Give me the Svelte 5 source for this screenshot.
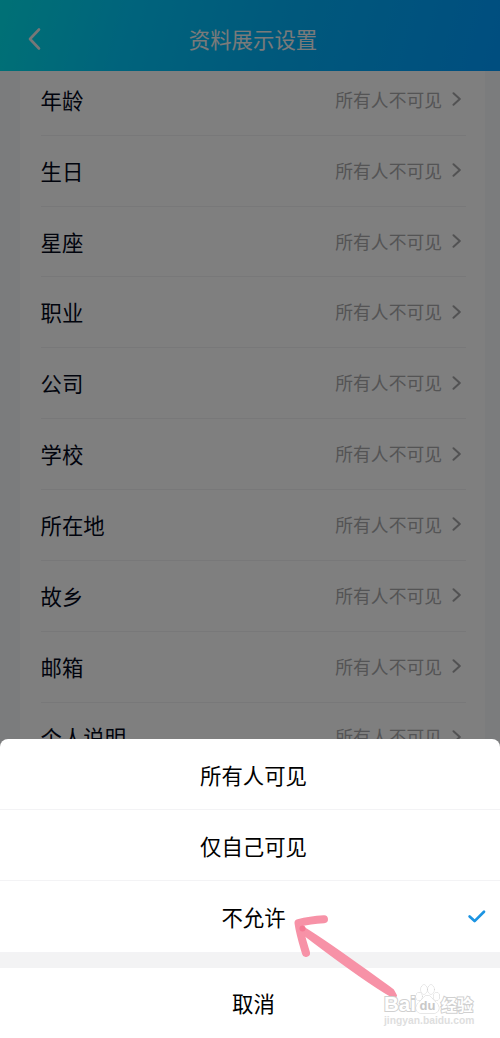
<script lang="ts">
    const fields = ["年龄", "生日", "星座", "职业", "公司", "学校", "所在地", "故乡", "邮箱", "个人说明"];
    const options = ["所有人可见", "仅自己可见", "不允许"];

    let selected = $state("不允许");
</script>

<div class="screen">
    <header>
        <svg class="back" width="16" height="24" viewBox="0 0 16 24">
            <path d="M13 2.500L4 12L13 21.500" />
        </svg>
        <h1>资料展示设置</h1>
    </header>

    <main>
        <div class="card">
            {#each fields as field}
                <div class="row">
                    <span class="name">{field}</span>
                    <span class="value">所有人不可见</span>
                    <svg class="chevron" width="10" height="14" viewBox="0 0 10 14">
                        <path d="M1.5 1.2L7.8 7L1.5 12.8" />
                    </svg>
                </div>
            {/each}
        </div>
    </main>

    <div class="backdrop"></div>

    <div class="sheet">
        {#each options as option}
            <button class="option" onclick={() => (selected = option)}>
                {option}
                {#if option === selected}
                    <svg class="check" width="20" height="16" viewBox="0 0 20 16">
                        <path d="M2.6 8.5L7.6 13.1L17 3.7" />
                    </svg>
                {/if}
            </button>
        {/each}
        <button class="option cancel">取消</button>
    </div>

    <svg class="arrow" width="120" height="100" viewBox="0 0 120 100">
        <path class="shaft" d="M15 18.500C45 37 72 58 103 80L106 85.500L105 87.500L101 86C72 69 45 48 12.500 23.500Z" />
        <path class="head" d="M34 9.200C25 9.700 16 11 8.500 13C10 24 13 33 16 43" />
        <circle class="tip" cx="12.500" cy="18.500" r="3" />
    </svg>

    <div class="watermark">
        <div class="brand">
            <span class="latin">Bai</span>
            <svg width="27" height="30" viewBox="0 0 27 30">
                <ellipse cx="5" cy="12.500" rx="3" ry="4" />
                <ellipse cx="10" cy="5.500" rx="3" ry="4.500" />
                <ellipse cx="17" cy="5.500" rx="3" ry="4.500" />
                <ellipse cx="22.500" cy="12.500" rx="3" ry="4" />
                <path d="M13.500 11.500C9.500 11.500 8.500 16 5 18.500C0.500 22 1.500 29 6.500 29H20.500C25.500 29 26.500 22 22 18.500C18.500 16 17.500 11.500 13.500 11.500Z" />
                <text x="13.500" y="26" text-anchor="middle">du</text>
            </svg>
            <span class="han">经验</span>
        </div>
        <div class="url">jingyan.baidu.com</div>
    </div>
</div>

<style>
    :global(body) {background: #fff}

    .screen {
        position: relative;
        display: flex;
        flex-direction: column;
        width: 500px;
        height: 1038px;
        overflow: hidden;
        font-family: "Noto Sans CJK SC", "Liberation Sans", sans-serif;
        color: #03081a;
    }

    header {
        display: grid;
        grid-template-columns: 70px 1fr 64px;
        align-items: center;
        flex: none;
        height: 70.5px;
        padding-top: 8px;
        box-sizing: border-box;
        background: linear-gradient(105deg, #00e2ec 0%, #00c8f8 25%, #00b2f8 55%, #009cff 100%);
    }

    h1 {
        margin: 0;
        font-size: 21.4px;
        font-weight: 400;
        line-height: 30px;
        text-align: center;
        color: #f4f4f4;
    }

    svg {
        fill: none;
        stroke-linecap: round;
        stroke-linejoin: round;
    }

    .back {
        margin-left: 26px;
        stroke: #eee;
        stroke-width: 2.6;
    }

    main {
        flex: 1;
        min-height: 0;
        overflow: hidden;
        padding: 0 15px 0 20px;
        background: #f7f8fa;
    }

    .card {
        margin-top: -5.6px;
        padding: 0 19px 0 20.500px;
        background: #fff;
    }

    .row {
        display: flex;
        align-items: center;
        height: 70.85px;
        box-sizing: border-box;
        border-bottom: 1px solid #f0f0f3;
    }

    .name {
        flex: 1;
        margin-top: -1px;
        font-size: 21.4px;
    }

    .value {
        margin-top: -2px;
        font-size: 17.8px;
        color: #a8a8aa;
    }

    .chevron {
        margin: -1px 4.5px 0 9.5px;
        stroke: #a4a4a6;
        stroke-width: 2;
    }

    .backdrop {
        position: absolute;
        inset: 0;
        background: rgba(0, 0, 0, 0.5);
    }

    .sheet {
        position: absolute;
        left: 0;
        right: 0;
        bottom: 0;
        border-radius: 8px 8px 0 0;
        background: #fff;
        overflow: hidden;
    }

    .option {
        position: relative;
        display: block;
        width: 100%;
        height: 71.2px;
        padding: 0 0 0 7px;
        border: 0;
        border-bottom: 1px solid #f3f3f5;
        background: none;
        font: inherit;
        font-size: 21.4px;
        color: #000;
    }

    .option.cancel {
        height: 85.4px;
        border-top: 15px solid #f3f3f4;
        border-bottom: 0;
    }

    .check {
        position: absolute;
        right: 13px;
        top: 27px;
        stroke: #1c94e2;
        stroke-width: 2.7;
    }

    .arrow {
        position: absolute;
        left: 290px;
        top: 910px;
    }

    .shaft {
        fill: #f792a7;
        stroke: #f792a7;
        stroke-width: 2;
    }

    .head {
        stroke: #f792a7;
        stroke-width: 8;
    }

    .tip {
        fill: #f47a94;
    }

    .watermark {
        position: absolute;
        left: 384px;
        top: 983px;
        color: #fff;
    }

    .brand {
        display: flex;
        align-items: flex-end;
        height: 31px;
        -webkit-text-stroke: 2px #d0d0d0;
        paint-order: stroke fill;
    }

    .latin {
        font: bold 20.500px/20px "Liberation Sans", sans-serif;
    }

    .brand svg {
        flex: none;
        margin-left: -2px;
        fill: #fff;
        stroke: #d0d0d0;
        stroke-width: 1;
    }

    .brand text {
        font: bold 13px "Liberation Sans", sans-serif;
        fill: #c8c8c8;
        stroke: none;
        -webkit-text-stroke: 0;
    }

    .han {
        font-size: 16px;
        font-weight: 700;
        line-height: 20px;
    }

    .url {
        font: bold 10.300px/13px "Liberation Sans", sans-serif;
        color: #dedede;
    }
</style>
